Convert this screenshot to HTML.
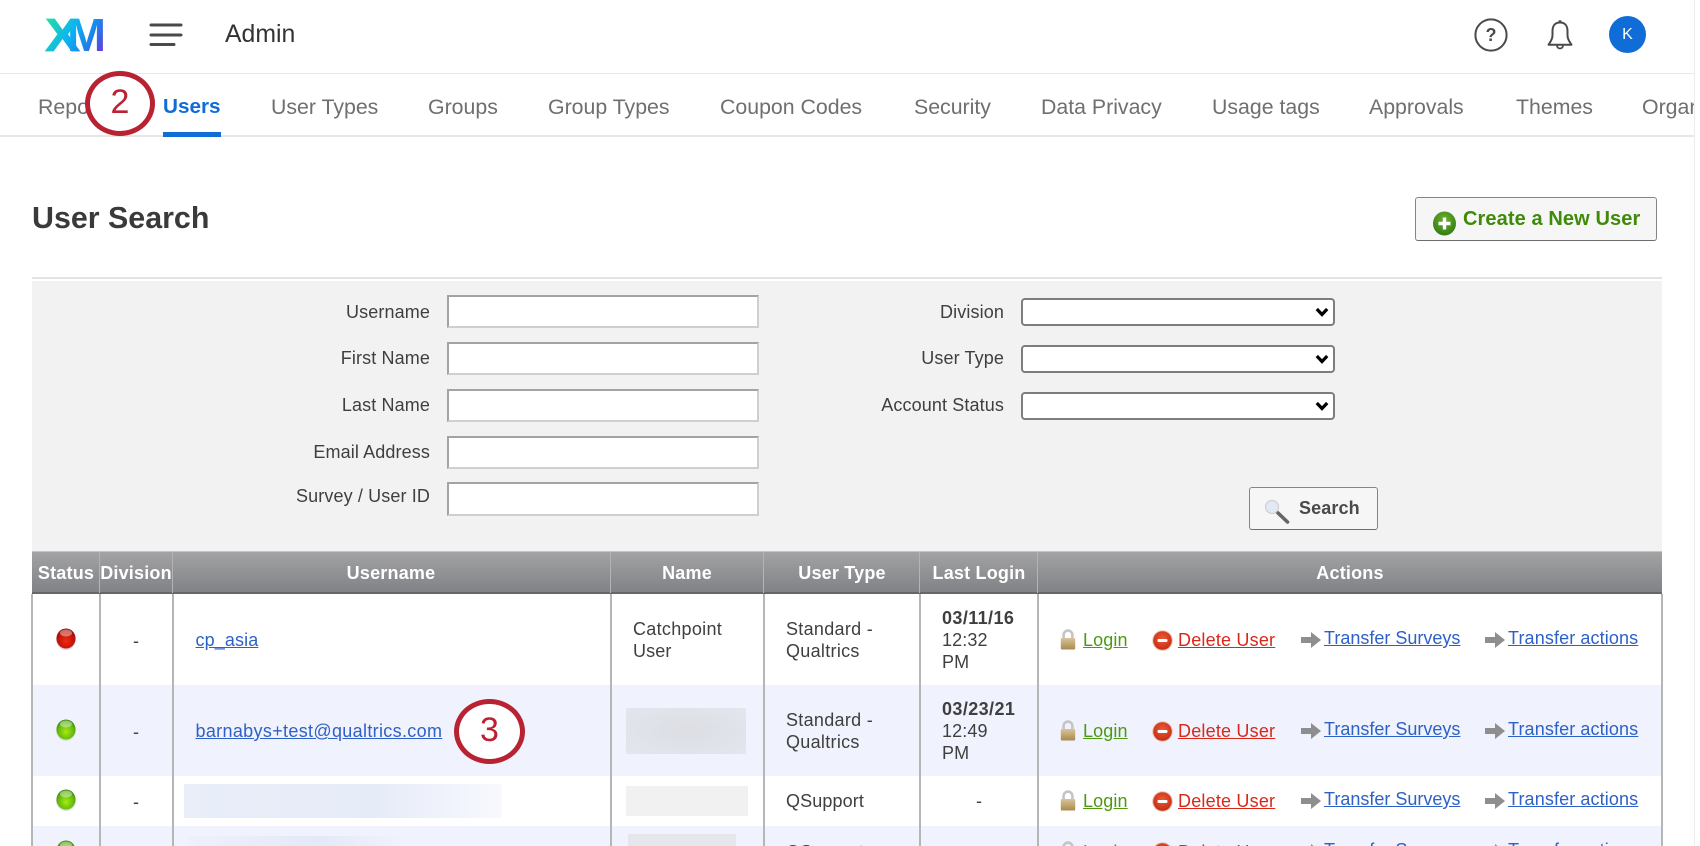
<!DOCTYPE html>
<html><head><meta charset="utf-8"><title>Admin - User Search</title>
<style>
html,body{margin:0;padding:0;background:#fff;width:1700px;height:846px;overflow:hidden}
#p{position:absolute;left:0;top:0;width:1700px;height:846px;overflow:hidden;font-family:"Liberation Sans",sans-serif;font-size:18px;color:#3f3f3f;filter:blur(.35px)}
.a{position:absolute}
.t{position:absolute;white-space:nowrap;line-height:22px;letter-spacing:.12px}
.r{text-align:right}
.c{text-align:center}
.nav{position:absolute;white-space:nowrap;font-size:21.3px;line-height:26px;top:19.5px;color:#6f6f6f}
.th{position:absolute;white-space:nowrap;font-weight:bold;color:#fff;line-height:22px;top:562px;text-align:center;transform:translateX(-50%);letter-spacing:.2px}
.in{position:absolute;left:447px;width:312px;height:33px;box-sizing:border-box;border:2px solid;border-color:#a3a3a3 #cfcfcf #cfcfcf #a3a3a3;background:#fff;padding:0;margin:0}
select.sel{position:absolute;left:1021px;width:314px;height:28px;box-sizing:border-box;border:2px solid #7d7d7d;border-radius:4px;background-color:#fff;margin:0;padding:0;color:#000;appearance:none;-webkit-appearance:none}
.vs{position:absolute;top:594px;bottom:0;width:2px;background:#b6b6b6}
.hs{position:absolute;top:552px;height:41px;width:1px;background:#b4b4b6}
.blk{color:#2e61c8;text-decoration:underline}
.grn{color:#4c9a10;text-decoration:underline}
.red{color:#d9281a;text-decoration:underline}
.ic{position:absolute}
.d{font-weight:bold;letter-spacing:.4px}
.btn{box-sizing:border-box;border:1.5px solid #858585;border-bottom-color:#6e6e6e;border-radius:3px;background:#f6f6f6}
.ring{position:absolute;box-sizing:border-box;border:5.5px solid #b92232;border-radius:50%;background:#fff;color:#b92232;text-align:center;font-size:34px}
</style></head><body>
<div id="p">
<svg width="0" height="0" style="position:absolute">
<defs>
<linearGradient id="xm" gradientUnits="userSpaceOnUse" x1="2" y1="2" x2="60" y2="34"><stop offset="0" stop-color="#24dfa0"/><stop offset=".42" stop-color="#0db4f0"/><stop offset=".72" stop-color="#1a86ea"/><stop offset="1" stop-color="#6a35de"/></linearGradient>
<linearGradient id="tan" x1="0" y1="0" x2="0" y2="1"><stop offset="0" stop-color="#d9c59a"/><stop offset="1" stop-color="#a88a4e"/></linearGradient>
<radialGradient id="rd" cx=".5" cy=".62" r=".6"><stop offset="0" stop-color="#ee2a12"/><stop offset=".7" stop-color="#c21208"/><stop offset="1" stop-color="#8f0e08"/></radialGradient>
<radialGradient id="gd" cx=".5" cy=".62" r=".6"><stop offset="0" stop-color="#a6ea10"/><stop offset=".7" stop-color="#63b80e"/><stop offset="1" stop-color="#3d8a12"/></radialGradient>
<radialGradient id="del" cx=".5" cy=".4" r=".65"><stop offset="0" stop-color="#ee5a36"/><stop offset="1" stop-color="#c22a12"/></radialGradient>
<radialGradient id="pl" cx=".5" cy=".35" r=".7"><stop offset="0" stop-color="#6eb032"/><stop offset="1" stop-color="#2d7a0e"/></radialGradient>
<symbol id="lock" viewBox="0 0 16 21"><path d="M3.6 10V6a4.4 4.4 0 0 1 8.800 0V10" fill="none" stroke="#c4c4c4" stroke-width="2.600"/><rect x=".8" y="9" width="14.400" height="11.500" rx="1" fill="url(#tan)"/></symbol>
<symbol id="delete" viewBox="0 0 21 21"><circle cx="10.500" cy="10.500" r="10.400" fill="#eccbc0"/><circle cx="10.500" cy="10.500" r="9.300" fill="url(#del)"/><rect x="5.500" y="9" width="10" height="3" rx="1.200" fill="#fff"/></symbol>
<symbol id="arrow" viewBox="0 0 20 18"><path d="M0 6H10V1L20 9 10 17V12H0Z" fill="#8e8e8e"/></symbol>
<symbol id="chev" viewBox="0 0 14 10"><path d="M1.800 2L7 7.500 12.200 2" fill="none" stroke="#000" stroke-width="3.200"/></symbol>
<symbol id="dotr" viewBox="0 0 20 22"><ellipse cx="10" cy="11.500" rx="10" ry="10.500" fill="#e8d8d8"/><ellipse cx="10" cy="10.500" rx="9.500" ry="10" fill="url(#rd)"/><ellipse cx="10" cy="5" rx="6" ry="3.500" fill="#fff" opacity=".4"/></symbol>
<symbol id="dotg" viewBox="0 0 20 22"><ellipse cx="10" cy="11.500" rx="10" ry="10.500" fill="#d8e0d8"/><ellipse cx="10" cy="10.500" rx="9.500" ry="10" fill="url(#gd)"/><ellipse cx="10" cy="5" rx="6" ry="3.500" fill="#fff" opacity=".4"/></symbol>
</defs></svg>

<!-- top bar -->
<svg class="ic" style="left:44px;top:17px" width="64" height="36" viewBox="0 0 64 36"><text x="1" y="34" font-family="Liberation Sans" font-weight="bold" font-size="46" textLength="35" lengthAdjust="spacingAndGlyphs" fill="url(#xm)" stroke="url(#xm)" stroke-width=".7">X</text><text x="23" y="34" font-family="Liberation Sans" font-weight="bold" font-size="46" textLength="39" lengthAdjust="spacingAndGlyphs" fill="url(#xm)">M</text></svg>
<svg class="ic" style="left:149px;top:22px" width="34" height="26" viewBox="0 0 34 26"><path d="M2 3H32M2 13H32M2 22.500H25" stroke="#4a4a4a" stroke-width="3" stroke-linecap="round" fill="none"/></svg>
<div class="t" style="left:225px;top:22px;font-size:24.800px;line-height:26px;color:#333;letter-spacing:0">Admin</div>
<svg class="ic" style="left:1473px;top:18px" width="36" height="34" viewBox="0 0 36 34"><circle cx="18" cy="17" r="15.600" fill="none" stroke="#4a4a4a" stroke-width="2"/><text x="18" y="23" text-anchor="middle" font-family="Liberation Sans" font-size="18" font-weight="bold" fill="#4a4a4a">?</text></svg>
<svg class="ic" style="left:1546px;top:18px" width="28" height="33" viewBox="0 0 28 33"><path d="M14 4.500C9 4.500 6.500 8 6.500 13V17.500C6.500 21.500 4.200 24 2.500 26.800H25.500C23.800 24 21.500 21.500 21.500 17.500V13C21.500 8 19 4.500 14 4.500Z" fill="none" stroke="#4a4a4a" stroke-width="2" stroke-linejoin="round"/><path d="M11 27.500a3 3 0 0 0 6 0" fill="none" stroke="#4a4a4a" stroke-width="1.800"/><circle cx="14" cy="3.500" r="1.400" fill="#4a4a4a"/></svg>
<div class="a c" style="left:1609px;top:16px;width:37px;height:37px;border-radius:50%;background:#106cd6;color:#fff;font-size:16px;line-height:38px">K</div>

<div class="a" style="left:0;top:73px;width:1694px;height:1px;background:#e8e8e8"></div>
<div class="a" style="left:0;top:135px;width:1694px;height:2px;background:#e6e6e6"></div>

<!-- tabs -->
<div style="position:absolute;left:0;top:74px;width:1694px;height:61px;overflow:hidden">
<div class="nav" style="left:38px">Reports</div>
<div class="nav" style="left:163px;color:#106cd6;font-weight:bold;font-size:20.700px">Users</div>
<div class="nav" style="left:271px">User Types</div>
<div class="nav" style="left:428px">Groups</div>
<div class="nav" style="left:548px">Group Types</div>
<div class="nav" style="left:720px">Coupon Codes</div>
<div class="nav" style="left:914px">Security</div>
<div class="nav" style="left:1041px">Data Privacy</div>
<div class="nav" style="left:1212px">Usage tags</div>
<div class="nav" style="left:1369px">Approvals</div>
<div class="nav" style="left:1516px">Themes</div>
<div class="nav" style="left:1642px">Organization</div>
</div>
<div class="a" style="left:163px;top:132px;width:58px;height:5px;background:#106cd6"></div>

<!-- heading -->
<div class="t" style="left:32px;top:201px;font-size:30.400px;line-height:34px;font-weight:bold;color:#3a3a3a;letter-spacing:0">User Search</div>
<div class="a btn" style="left:1415px;top:197px;width:242px;height:44px"></div>
<svg class="ic" style="left:1432px;top:211px" width="25" height="25" viewBox="0 0 25 25"><ellipse cx="12.500" cy="12.500" rx="11.500" ry="12" fill="url(#pl)"/><path d="M12.500 6.500V18.500M6.500 12.500H18.500" stroke="#fff" stroke-width="3.400"/></svg>
<div class="t" style="left:1463px;top:208px;font-size:20px;font-weight:bold;color:#408a0a;letter-spacing:.1px">Create a New User</div>

<div class="a" style="left:32px;top:277px;width:1630px;height:2px;background:#e4e4e4"></div>
<div class="a" style="left:32px;top:281px;width:1630px;height:270px;background:#f2f2f2"></div>

<!-- form left -->
<div class="t r" style="left:230px;width:200px;top:301px">Username</div>
<div class="t r" style="left:230px;width:200px;top:347px">First Name</div>
<div class="t r" style="left:230px;width:200px;top:394px">Last Name</div>
<div class="t r" style="left:230px;width:200px;top:441px">Email Address</div>
<div class="t r" style="left:230px;width:200px;top:485px">Survey / User ID</div>
<div class="in" style="top:295px"></div>
<div class="in" style="top:342px"></div>
<div class="in" style="top:389px"></div>
<div class="in" style="top:436px"></div>
<div class="in" style="top:482px;height:34px"></div>

<!-- form right -->
<div class="t r" style="left:804px;width:200px;top:301px">Division</div>
<div class="t r" style="left:804px;width:200px;top:347px">User Type</div>
<div class="t r" style="left:804px;width:200px;top:394px">Account Status</div>
<select class="sel" style="top:298px"><option></option></select>
<select class="sel" style="top:345px"><option></option></select>
<select class="sel" style="top:392px"><option></option></select>
<svg class="ic" style="left:1315px;top:307px" width="14" height="10"><use href="#chev"/></svg>
<svg class="ic" style="left:1315px;top:354px" width="14" height="10"><use href="#chev"/></svg>
<svg class="ic" style="left:1315px;top:401px" width="14" height="10"><use href="#chev"/></svg>

<div class="a btn" style="left:1249px;top:487px;width:129px;height:43px"></div>
<svg class="ic" style="left:1265px;top:498px" width="28" height="28" viewBox="0 0 28 28"><path d="M12.500 14.500L22.500 24" stroke="#666" stroke-width="3.600" stroke-linecap="round"/><circle cx="7" cy="9" r="6.500" fill="#e2e9f6" stroke="#cfcfcf" stroke-width="1.200"/></svg>
<div class="t" style="left:1299px;top:497px;font-weight:bold;color:#4a4a4a">Search</div>

<!-- table -->
<div class="a" style="left:32px;top:594px;width:1630px;height:252px;background:#fff"></div>
<div class="a" style="left:32px;top:685px;width:1630px;height:91px;background:#f0f3fd"></div>
<div class="a" style="left:32px;top:826px;width:1630px;height:20px;background:#f0f3fd"></div>
<div class="a" style="left:32px;top:551px;width:1630px;height:43px;background:linear-gradient(#a3a3a5,#808285);border-top:1px solid #c4c4c4;border-bottom:2px solid #666;box-sizing:border-box"></div>
<div class="vs" style="left:31px"></div>
<div class="vs" style="left:99px"></div>
<div class="vs" style="left:172px"></div>
<div class="vs" style="left:610px"></div>
<div class="vs" style="left:763px"></div>
<div class="vs" style="left:919px"></div>
<div class="vs" style="left:1037px"></div>
<div class="vs" style="left:1661px"></div>
<div class="hs" style="left:99px"></div>
<div class="hs" style="left:172px"></div>
<div class="hs" style="left:610px"></div>
<div class="hs" style="left:763px"></div>
<div class="hs" style="left:919px"></div>
<div class="hs" style="left:1037px"></div>

<div class="th" style="left:66px">Status</div>
<div class="th" style="left:136px">Division</div>
<div class="th" style="left:391px">Username</div>
<div class="th" style="left:687px">Name</div>
<div class="th" style="left:842px">User Type</div>
<div class="th" style="left:979px">Last Login</div>
<div class="th" style="left:1350px">Actions</div>

<!-- row dots -->
<svg class="ic" style="left:56px;top:628px" width="20" height="22"><use href="#dotr"/></svg>
<svg class="ic" style="left:56px;top:719px" width="20" height="22"><use href="#dotg"/></svg>
<svg class="ic" style="left:56px;top:789px" width="20" height="22"><use href="#dotg"/></svg>
<svg class="ic" style="left:56px;top:840px" width="20" height="22"><use href="#dotg"/></svg>

<div class="t" style="left:133px;top:630px">-</div>
<div class="t" style="left:133px;top:721px">-</div>
<div class="t" style="left:133px;top:791px">-</div>

<div class="t blk" style="left:195.500px;top:629px">cp_asia</div>
<div class="t blk" style="left:195.500px;top:720px;letter-spacing:.33px">barnabys+test@qualtrics.com</div>

<div class="a" style="left:184px;top:784px;width:318px;height:34px;background:linear-gradient(90deg,#e9eef9,#e6ebf8 60%,#f8f9fe)"></div>
<div class="a" style="left:188px;top:836px;width:217px;height:10px;background:linear-gradient(90deg,#eef1fb,#e4e9f7 60%,#f0f3fd)"></div>
<div class="a" style="left:626px;top:708px;width:120px;height:46px;background:radial-gradient(ellipse at center,#dcdee4,#e4e6ee)"></div>
<div class="a" style="left:626px;top:786px;width:122px;height:30px;background:#f1f1f1"></div>
<div class="a" style="left:628px;top:834px;width:108px;height:12px;background:#e6e7ec"></div>

<div class="t" style="left:633px;top:618px;letter-spacing:.3px">Catchpoint</div>
<div class="t" style="left:633px;top:640px">User</div>
<div class="t" style="left:786px;top:618px;letter-spacing:.3px">Standard -</div>
<div class="t" style="left:786px;top:640px;letter-spacing:.3px">Qualtrics</div>
<div class="t" style="left:786px;top:709px;letter-spacing:.3px">Standard -</div>
<div class="t" style="left:786px;top:731px;letter-spacing:.3px">Qualtrics</div>
<div class="t" style="left:786px;top:790px">QSupport</div>
<div class="t" style="left:786px;top:841px">QSupport</div>

<div class="t d" style="left:942px;top:607px">03/11/16</div>
<div class="t" style="left:942px;top:629px">12:32</div>
<div class="t" style="left:942px;top:651px">PM</div>
<div class="t d" style="left:942px;top:698px">03/23/21</div>
<div class="t" style="left:942px;top:720px">12:49</div>
<div class="t" style="left:942px;top:742px">PM</div>
<div class="t" style="left:976px;top:790px">-</div>

<!-- actions row 1 -->
<svg class="ic" style="left:1060px;top:629px" width="16" height="21"><use href="#lock"/></svg>
<div class="t grn" style="left:1083px;top:629px">Login</div>
<svg class="ic" style="left:1152px;top:630px" width="21" height="21"><use href="#delete"/></svg>
<div class="t red" style="left:1178px;top:629px;letter-spacing:.2px">Delete User</div>
<svg class="ic" style="left:1301px;top:631px" width="20" height="18"><use href="#arrow"/></svg>
<div class="t blk" style="left:1324px;top:627px;letter-spacing:0">Transfer Surveys</div>
<svg class="ic" style="left:1485px;top:631px" width="20" height="18"><use href="#arrow"/></svg>
<div class="t blk" style="left:1508px;top:627px">Transfer actions</div>
<!-- actions row 2 -->
<svg class="ic" style="left:1060px;top:720px" width="16" height="21"><use href="#lock"/></svg>
<div class="t grn" style="left:1083px;top:720px">Login</div>
<svg class="ic" style="left:1152px;top:721px" width="21" height="21"><use href="#delete"/></svg>
<div class="t red" style="left:1178px;top:720px;letter-spacing:.2px">Delete User</div>
<svg class="ic" style="left:1301px;top:722px" width="20" height="18"><use href="#arrow"/></svg>
<div class="t blk" style="left:1324px;top:718px;letter-spacing:0">Transfer Surveys</div>
<svg class="ic" style="left:1485px;top:722px" width="20" height="18"><use href="#arrow"/></svg>
<div class="t blk" style="left:1508px;top:718px">Transfer actions</div>
<!-- actions row 3 -->
<svg class="ic" style="left:1060px;top:790px" width="16" height="21"><use href="#lock"/></svg>
<div class="t grn" style="left:1083px;top:790px">Login</div>
<svg class="ic" style="left:1152px;top:791px" width="21" height="21"><use href="#delete"/></svg>
<div class="t red" style="left:1178px;top:790px;letter-spacing:.2px">Delete User</div>
<svg class="ic" style="left:1301px;top:792px" width="20" height="18"><use href="#arrow"/></svg>
<div class="t blk" style="left:1324px;top:788px;letter-spacing:0">Transfer Surveys</div>
<svg class="ic" style="left:1485px;top:792px" width="20" height="18"><use href="#arrow"/></svg>
<div class="t blk" style="left:1508px;top:788px">Transfer actions</div>
<!-- actions row 4 -->
<svg class="ic" style="left:1060px;top:841px" width="16" height="21"><use href="#lock"/></svg>
<div class="t grn" style="left:1083px;top:841px">Login</div>
<svg class="ic" style="left:1152px;top:842px" width="21" height="21"><use href="#delete"/></svg>
<div class="t red" style="left:1178px;top:841px;letter-spacing:.2px">Delete User</div>
<svg class="ic" style="left:1301px;top:843px" width="20" height="18"><use href="#arrow"/></svg>
<div class="t blk" style="left:1324px;top:839px;letter-spacing:0">Transfer Surveys</div>
<svg class="ic" style="left:1485px;top:843px" width="20" height="18"><use href="#arrow"/></svg>
<div class="t blk" style="left:1508px;top:839px">Transfer actions</div>

<!-- annotations -->
<div class="ring" style="left:85px;top:71px;width:70px;height:65px;line-height:52px">2</div>
<div class="ring" style="left:454px;top:699px;width:71px;height:65px;line-height:52px">3</div>

<div class="a" style="left:1694px;top:0;width:1px;height:846px;background:#ececec"></div>
</div>
</body></html>
